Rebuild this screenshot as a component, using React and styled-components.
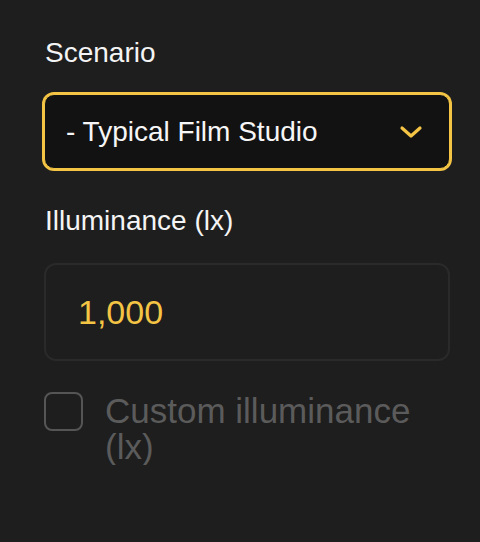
import React from "react"
import styled, { createGlobalStyle } from "styled-components"

const yellow = "#f4c445"

const GlobalStyle = createGlobalStyle`
  html, body {
    margin: 0;
    background: #1e1e1e;
  }
  body {
    font-family: "Liberation Sans", Arial, Helvetica, sans-serif;
  }
`

const Panel = styled.div`
  width: 406px;
  padding: 37px 30px 0 44px;
  display: flex;
  flex-direction: column;
`

const Label = styled.div`
  color: #f4f4f4;
  font-size: 28px;
  line-height: 32px;
  margin-left: 1px;
  margin-bottom: ${(p) => p.$gap}px;
`

const Select = styled.div`
  box-sizing: border-box;
  height: 75px;
  margin: 4px 0 36px;
  padding: 0 26px 0 21px;
  display: flex;
  align-items: center;
  justify-content: space-between;
  background: #121212;
  border: 1px solid ${yellow};
  border-radius: 10px;
  box-shadow: 0 0 0 2px ${yellow};
  color: #f6f6f6;
  font-size: 28px;
`

const Chevron = () => (
  <svg width="24" height="14" viewBox="0 0 24 14" fill="none">
    <path
      d="M3 3 L12 11 L21 3"
      stroke={yellow}
      strokeWidth="3.2"
      strokeLinecap="round"
      strokeLinejoin="round"
    />
  </svg>
)

const NumberField = styled.div`
  box-sizing: border-box;
  height: 98px;
  padding: 0 32px;
  display: flex;
  align-items: center;
  border: 2px solid #2a2a2a;
  border-radius: 12px;
  color: ${yellow};
  font-size: 34px;
  margin-bottom: 31px;
`

const CheckRow = styled.label`
  display: flex;
  align-items: flex-start;
  gap: 22px;
`

const Box = styled.span`
  box-sizing: border-box;
  flex: none;
  width: 39px;
  height: 39px;
  border: 2px solid #555;
  border-radius: 8px;
`

const CheckText = styled.span`
  color: #5b5b5b;
  font-size: 35px;
  line-height: 36px;
  margin-top: 1px;
`

export default function App() {
  return (
    <>
      <GlobalStyle />
      <Panel>
        <Label $gap={21}>Scenario</Label>
        <Select>
          <span>- Typical Film Studio</span>
          <Chevron />
        </Select>
        <Label $gap={26}>Illuminance (lx)</Label>
        <NumberField>1,000</NumberField>
        <CheckRow>
          <Box />
          <CheckText>Custom illuminance (lx)</CheckText>
        </CheckRow>
      </Panel>
    </>
  )
}
